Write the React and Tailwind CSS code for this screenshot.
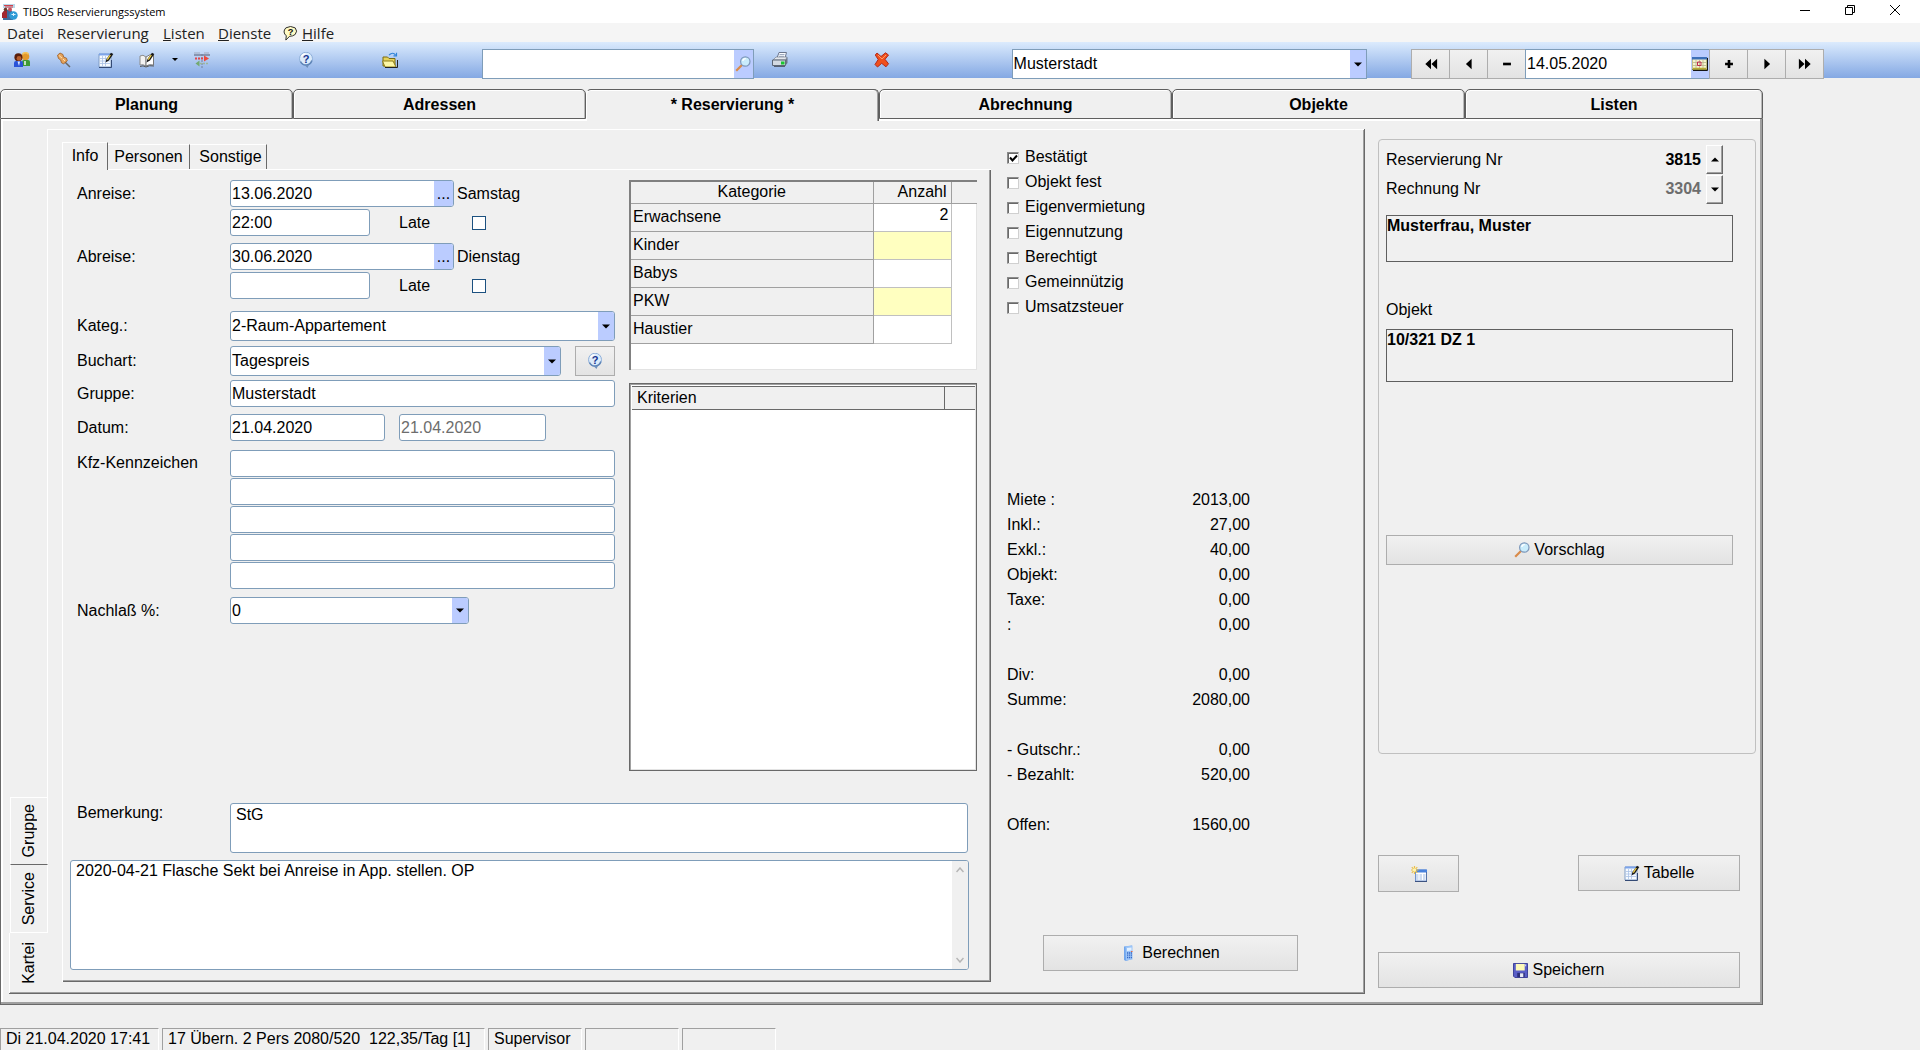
import React from "react";

const FIELD = "h-[27px] rounded-[3px] border border-[#7f9db9] bg-white pl-px text-base text-black outline-none";
const BUTTON = "flex items-center justify-center border border-[#adadad] bg-linear-to-b from-[#f1f1f1] to-[#e3e3e3]";
const BEVEL = "border-r border-b border-[#696969] shadow-[inset_-1px_-1px_0_#a0a0a0]";

function Icon({ children, className = "size-4" }) {
  return (
    <svg viewBox="0 0 16 16" className={`shrink-0 ${className}`} aria-hidden="true">
      {children}
    </svg>
  );
}

const AppIcon = () => (
  <Icon>
    <rect x="1" y="0" width="12" height="4" fill="#b9d9ea" />
    <path d="M2 1.5h9M3 3h8" stroke="#d2414b" />
    <path d="M1 16V8l2-2h6l2 3v7z" fill="#3f6d9c" />
    <path d="M0 14V9l2-2h3v7z" fill="#a3282f" />
    <circle cx="3.5" cy="5.5" r="1.8" fill="#6b3a2a" />
    <circle cx="8" cy="5.5" r="2" fill="#c9505b" />
    <circle cx="11.5" cy="11.5" r="4.2" fill="#2f9bd6" />
    <path d="M11.5 9v3M9.5 10.5h4" stroke="#d9f1ff" />
  </Icon>
);

const PeopleIcon = () => (
  <Icon>
    <circle cx="11.5" cy="4.6" r="3.8" fill="#e39a2e" />
    <path d="M8.5 2.2a3.6 3.6 0 0 1 6 0" stroke="#f3c45f" strokeWidth="1.6" fill="none" />
    <path d="M8 14V10q0-2 2-2h4q2 0 2 2v4z" fill="#3d9a35" />
    <path d="M11 9v4" stroke="#fff" strokeWidth="1.4" />
    <circle cx="4.4" cy="5.2" r="4" fill="#5a1f0c" />
    <circle cx="5" cy="6.4" r="2.4" fill="#b85e2d" />
    <path d="M0 15v-4q0-2 2-2h5q2 0 2 2v4z" fill="#2a53d8" />
    <path d="M3.5 9.5 5 14l1-4.5z" fill="#dfeaff" />
  </Icon>
);

const PinIcon = () => (
  <Icon>
    <path d="m8 9 6 6" stroke="#666" strokeWidth="1.5" />
    <path d="M1.5 3.2 4 1l3 1.5.5 2.5 3 1.2.8 2.6-3.6 3-2.2-1L4.7 8 2.5 6.5z" fill="#e6a45c" stroke="#9a5a20" strokeWidth=".8" />
    <path d="M3 3.5 6 6M7 7l2 2" stroke="#ffe0b0" />
  </Icon>
);

const Pencil = () => (
  <>
    <path d="m7.500 10.500 1-3.500L13 .8 15.300 2 11 8.500z" fill="#181818" />
    <path d="m9.300 7.700 3-4.700" stroke="#f3d34a" strokeWidth="1.3" />
  </>
);

const EditIcon = () => (
  <Icon>
    <path d="M1 2h12v13H1z" fill="#f7fbff" stroke="#7f9cc6" />
    <path d="M1 1.500h12v2H1z" fill="#7da4ea" />
    <path d="M2 6.500h10M2 9h10M2 11.500h10M4.500 4v10M7.500 4v10" stroke="#a9c1e6" strokeWidth=".8" />
    <path d="M1 15.500h12.500V8" stroke="#344a75" fill="none" />
    <Pencil />
  </Icon>
);

const BookIcon = () => (
  <Icon>
    <path d="M1 4q3-2 6 1v9Q4 12 1 13z" fill="#f3f3f3" stroke="#8c8c8c" />
    <path d="M7 5q3-3 7.500-2v10Q10 12 7 14z" fill="#fff" stroke="#777" />
    <path d="M1 14.500q3-1.500 6 .5 3-2 8-1" stroke="#555" fill="none" />
    <Pencil />
  </Icon>
);

const MergeIcon = () => (
  <Icon>
    <path d="M0 3h16" stroke="#75809b" strokeWidth="1.5" />
    <path d="M8 2v14" stroke="#75809b" strokeDasharray="2 1" />
    <path d="M0 1h6M10 1h5" stroke="#a0a9bd" />
    <path d="M1 6.500h9" stroke="#e1474b" strokeWidth="2" strokeDasharray="2 1" />
    <path d="m10 3.500 5 3-5 3z" fill="#ed4a3c" />
    <path d="M6 11.500h8" stroke="#9db69a" strokeWidth="1.5" strokeDasharray="2 1" />
    <path d="m5.500 8.500-4 3 4 3z" fill="#73a970" />
  </Icon>
);

const HelpIcon = () => (
  <Icon>
    <path d="M5 11.500 9.500 16l2-4.500z" fill="#6f8fba" />
    <circle cx="8" cy="6.700" r="6.500" fill="#dcebfa" stroke="#8fb0da" />
    <path d="M2.500 9.500a6 6 0 0 0 11.300-1" stroke="#5f86b8" fill="none" strokeWidth="1.5" />
    <path d="M3.500 4.500a5 5 0 0 1 4-2.700" stroke="#fff" fill="none" strokeWidth="1.5" />
    <text x="8" y="11" textAnchor="middle" fontSize="11" fontWeight="700" fontFamily="Liberation Sans, sans-serif" fill="#16348f">?</text>
  </Icon>
);

const MenuHelpIcon = () => (
  <Icon className="size-[15px]">
    <path d="M3 2q5-3 10 0 3 3.500 0 7-2.500 2-6 2l-4 4 .5-4.500Q-1 6.500 3 2z" fill="#fffbc4" stroke="#222" />
    <text x="8" y="10" textAnchor="middle" fontSize="10" fontWeight="700" fontFamily="Liberation Sans, sans-serif" fill="#111">?</text>
  </Icon>
);

const FolderIcon = () => (
  <Icon>
    <path d="M7 3q4-3.500 6.500 0M14.500.8v3h-3" stroke="#2f83d8" fill="none" strokeWidth="1.2" />
    <path d="M1 14V5h4.500L7 6.500h6V14z" fill="#e6d35a" stroke="#7b6b10" />
    <path d="m3 15-2.500-6H11l3 6z" fill="#fdf7a4" stroke="#8d7d1c" />
    <path d="M15.500 8v7.500H3" stroke="#222" fill="none" />
  </Icon>
);

const SearchIcon = () => (
  <Icon>
    <path d="m1.200 14.800 6-6" stroke="#d98b4a" strokeWidth="2.2" />
    <circle cx="10.300" cy="5.500" r="4.700" fill="#c9ecfb" stroke="#7d97ba" strokeWidth="1.2" />
    <path d="M7.800 5a2.800 2.800 0 0 1 3-2.300" stroke="#fff" fill="none" strokeWidth="1.3" />
  </Icon>
);

const PrinterIcon = () => (
  <Icon>
    <path d="m5 6 2-5.500h7.500L13 6z" fill="#fafcff" stroke="#69758c" />
    <path d="M7.500 2.500h5M7 4.300h5" stroke="#8795b0" strokeWidth=".8" />
    <path d="m1 8 3-3h11l-1.500 3z" fill="#e4e8ee" stroke="#7a8290" strokeWidth=".7" />
    <path d="M.5 8h13v5.500H.5z" fill="#d3d9e1" stroke="#5c6675" />
    <path d="m13.500 8 2-3v6l-2 2.500z" fill="#6c7685" />
    <path d="M9 9.500h3.500v3H9z" fill="#19c82f" />
    <path d="M2 14.500h11" stroke="#555f70" />
  </Icon>
);

const DeleteIcon = () => (
  <Icon>
    <path d="m3 1 4 3.500L11.500.8 14.500 3 11 7.300l3.500 4.500-2.500 3-4.300-3.500L3.500 15 1 12.500l3.200-5L1.300 3z" fill="#f0501c" stroke="#b3291a" />
    <path d="m4 3 4 4 4-4" stroke="#ff9b6a" fill="none" />
  </Icon>
);

const CalendarIcon = () => (
  <Icon>
    <path d="M0 1.500h15v12H0z" fill="#f6f3cf" stroke="#8d8a3c" />
    <path d="M0 1h15v2.500H0z" fill="#3d6fb8" />
    <path d="M1 6.500h13M1 9.500h13M4 4v8M7.500 4v8M11 4v8" stroke="#b9b48a" strokeWidth=".8" />
    <path d="M5.500 6h3.500v3.500H5.500z" fill="none" stroke="#c02850" />
    <path d="M1 12.500h13" stroke="#b7aa35" strokeWidth="1.5" />
    <path d="M1 14.500h14.500V2" stroke="#151515" fill="none" />
  </Icon>
);

const CalculatorIcon = () => (
  <Icon>
    <path d="m3 1.500 8-1V14l-6 2-2-1z" fill="#6fa5ec" />
    <path d="m4.500 1.500 7-1v14l-6.500 1z" fill="#9cc5f8" />
    <path d="m6 3 4.500-.5v3L6 6z" fill="#e3f1ff" />
    <path d="M6 8h5M6 10.200h5M6 12.500h5" stroke="#3668c4" strokeWidth="1.3" strokeDasharray="1.200 .7" />
    <path d="M10 6.500h1.500" stroke="#f06a3c" />
  </Icon>
);

const NewTableIcon = () => (
  <Icon>
    <path d="M4.500 4h11v11h-11z" fill="#fff" stroke="#7094d0" />
    <path d="M4 3.500h12v3H4z" fill="#4a83dd" />
    <path d="M5 9h10M5 11h10M5 13h10" stroke="#9db9e4" strokeDasharray="2.500 1" />
    <path d="M4 15.500h12V6" stroke="#3c5280" fill="none" />
    <path d="M3.500 0v8M0 4h7.500M.8 1.200l5.500 5.600M6.300 1.200.8 6.800" stroke="#ecc04a" strokeWidth="1.2" />
    <circle cx="3.500" cy="4" r="1.700" fill="#fff5b0" />
  </Icon>
);

const SaveIcon = () => (
  <Icon className="size-[15px]">
    <path d="M.5.500h15v15H2L.500 14z" fill="#5a5fc8" stroke="#373b94" />
    <path d="M3 1h9.500v7H3z" fill="#fdf9b8" />
    <path d="M4.500 10.500h8V15h-8z" fill="#2d2f7a" />
    <path d="M7.500 11h3.500v4H7.500z" fill="#e8eaf6" />
    <path d="M13.500 1.500v2" stroke="#dfe2ff" />
  </Icon>
);

function Caret({ up = false }) {
  return (
    <svg viewBox="0 0 8 5" className="h-[5px] w-2" aria-hidden="true">
      <path d={up ? "M0 4.500h8L4 .5z" : "M0 .5h8L4 4.500z"} fill="#000" />
    </svg>
  );
}

function Combo({ label, value, className, square = false }) {
  return (
    <div className={`relative flex border border-[#7f9db9] bg-white ${square ? "" : "overflow-hidden rounded-[3px]"} ${className}`}>
      <select aria-label={label} defaultValue={value} className="w-full appearance-none bg-transparent pl-px text-base text-black outline-none">
        <option>{value}</option>
      </select>
      <span className="pointer-events-none absolute inset-y-0 right-0 flex w-4 items-center justify-center bg-[#bbccff]">
        <Caret />
      </span>
    </div>
  );
}

function Row({ label, htmlFor, className = "", children }) {
  return (
    <div className={`flex items-center ${className}`}>
      <label htmlFor={htmlFor} className="w-[153px] shrink-0">{label}</label>
      {children}
    </div>
  );
}

function DateField({ id, value, day }) {
  return (
    <>
      <div className="flex w-[224px] overflow-hidden rounded-[3px] border border-[#7f9db9] bg-white">
        <input id={id} defaultValue={value} className="h-[25px] min-w-0 flex-1 pl-px outline-none" />
        <button type="button" aria-label={`${day} wählen`} className="w-[19px] bg-[#bbccff]">...</button>
      </div>
      <span className="ml-[3px]">{day}</span>
    </>
  );
}

function TimeRow({ name, value }) {
  return (
    <div className="flex items-center pl-[153px]">
      <input aria-label={`${name} Uhrzeit`} defaultValue={value} className={`${FIELD} w-[140px]`} />
      <label htmlFor={`${name}-late`} className="ml-[29px] w-[73px]">Late</label>
      <input id={`${name}-late`} type="checkbox" className="size-[14px] appearance-none border border-[#1c5180] bg-white checked:bg-[#1c5180]" />
    </div>
  );
}

const NAV_GLYPHS = {
  first: "M8 2v12L1.500 8zM15 2v12L8.500 8z",
  prev: "M11 2v12L4.500 8z",
  minus: "M3.500 6.500h9v3h-9z",
  plus: "M6.500 3.500h3v3h3v3h-3v3h-3v-3h-3v-3h3z",
  next: "M5 2v12l6.500-6z",
  last: "M1 2v12l6.500-6zM8 2v12l6.500-6z",
};

function NavButton({ glyph, label }) {
  return (
    <button type="button" aria-label={label} className={`${BUTTON} -mr-px w-[39px]`}>
      <Icon className="size-[14px]"><path d={NAV_GLYPHS[glyph]} /></Icon>
    </button>
  );
}

function ToolButton({ label, className, children }) {
  return (
    <button type="button" aria-label={label} className={`mb-px shrink-0 ${className}`}>
      {children}
    </button>
  );
}

function Header() {
  return (
    <header>
      <div className="flex h-[23px] items-center bg-white pl-[2px] font-['Open_Sans',sans-serif]">
        <AppIcon />
        <span className="ml-[5px] text-[11px]">TIBOS Reservierungssystem</span>
        <div className="mr-5 mb-[3px] ml-auto flex items-center gap-[35px]">
          <button type="button" aria-label="Minimieren"><svg viewBox="0 0 10 10" className="size-[10px]"><path d="M0 5.500h10" stroke="#000" /></svg></button>
          <button type="button" aria-label="Verkleinern"><svg viewBox="0 0 10 10" className="size-[10px]"><path d="M.5 2.500h7v7h-7zM2.500 2.500v-2h7v7h-2" fill="none" stroke="#000" /></svg></button>
          <button type="button" aria-label="Schließen"><svg viewBox="0 0 10 10" className="size-[10px]"><path d="m0 0 10 10M10 0 0 10" stroke="#000" /></svg></button>
        </div>
      </div>
      <nav className="flex h-[19px] items-center bg-[#f5f5f5] pt-px pl-[7px] font-['Open_Sans',sans-serif] text-[15px] leading-[18px] text-[#222]">
        <button type="button" className="w-[50px] text-left">Datei</button>
        <button type="button" className="w-[106px] text-left">Reservierung</button>
        <button type="button" className="w-[55px] text-left"><u>L</u>isten</button>
        <button type="button" className="w-[65px] text-left"><u>D</u>ienste</button>
        <button type="button" className="flex items-center gap-1"><MenuHelpIcon /><span><u>H</u>ilfe</span></button>
      </nav>
      <div className="flex h-9 items-center bg-linear-to-b from-[#dcebfd] to-[#84a8e3] pr-[97px] pl-[14px]">
        <ToolButton label="Personen" className=""><PeopleIcon /></ToolButton>
        <ToolButton label="Anheften" className="ml-[26px]"><PinIcon /></ToolButton>
        <ToolButton label="Bearbeiten" className="ml-[26px]"><EditIcon /></ToolButton>
        <ToolButton label="Buch" className="ml-[25px]"><BookIcon /></ToolButton>
        <ToolButton label="Mehr" className="ml-[17px] w-2"><svg viewBox="0 0 6 3" className="h-[3px] w-[6px]"><path d="M0 0h6L3 3z" /></svg></ToolButton>
        <ToolButton label="Umbuchen" className="ml-[14px]"><MergeIcon /></ToolButton>
        <ToolButton label="Hilfe" className="ml-[88px]"><HelpIcon /></ToolButton>
        <ToolButton label="Öffnen" className="ml-[68px]"><FolderIcon /></ToolButton>
        <div className="mt-2 ml-[84px] flex h-[30px] min-w-0 flex-[270] border border-[#7f9db9] bg-white">
          <input aria-label="Suche" className="min-w-0 flex-1 pl-px outline-none" />
          <button type="button" aria-label="Suchen" className="flex w-[19px] items-center justify-center bg-[#bbccff]"><SearchIcon /></button>
        </div>
        <ToolButton label="Drucken" className="ml-[18px]"><PrinterIcon /></ToolButton>
        <ToolButton label="Löschen" className="ml-[86px]"><DeleteIcon /></ToolButton>
        <Combo square label="Ort" value="Musterstadt" className="mt-2 ml-[122px] h-[30px] min-w-0 flex-[354]" />
        <div className="mt-2 ml-[44px] flex h-[30px]">
          <NavButton glyph="first" label="Erster" />
          <NavButton glyph="prev" label="Zurück" />
          <NavButton glyph="minus" label="Tag weniger" />
          <div className="-mr-px flex w-[185px] border border-[#7f9db9] bg-white">
            <input aria-label="Datum" defaultValue="14.05.2020" className="min-w-0 flex-1 pl-px outline-none" />
            <button type="button" aria-label="Kalender" className="flex w-[18px] items-center justify-center bg-[#bbccff]"><CalendarIcon /></button>
          </div>
          <NavButton glyph="plus" label="Tag mehr" />
          <NavButton glyph="next" label="Weiter" />
          <NavButton glyph="last" label="Letzter" />
        </div>
      </div>
    </header>
  );
}

const TABS = ["Planung", "Adressen", "* Reservierung *", "Abrechnung", "Objekte", "Listen"];

function MainTabs() {
  return (
    <div role="tablist" className="grid grid-cols-[repeat(5,293fr)_298fr]">
      {TABS.map((tab, i) => (
        <button
          key={tab}
          type="button"
          role="tab"
          aria-selected={i === 2}
          className={`rounded-t-[5px] border border-[#5f5f5f] font-bold ${
            i === 2
              ? "relative -mb-[2px] h-8 border-b-0 border-l-white bg-[#f0f0f0] pb-px shadow-[inset_-1px_0_0_#a0a0a0,inset_0_1px_0_#fff]"
              : "h-[30px] pt-px shadow-[inset_1px_1px_0_#fff,inset_-1px_0_0_#b8b8b8]"
          }`}
        >
          {tab}
        </button>
      ))}
    </div>
  );
}

function InfoForm() {
  return (
    <div className="w-[538px] shrink-0">
      <Row label="Anreise:" htmlFor="anreise"><DateField id="anreise" value="13.06.2020" day="Samstag" /></Row>
      <div className="mt-[2px]"><TimeRow name="anreise" value="22:00" /></div>
      <Row label="Abreise:" htmlFor="abreise" className="mt-[7px]"><DateField id="abreise" value="30.06.2020" day="Dienstag" /></Row>
      <div className="mt-[2px]"><TimeRow name="abreise" value="" /></div>
      <Row label="Kateg.:" className="mt-3"><Combo label="Kategorie" value="2-Raum-Appartement" className="h-[30px] w-[385px]" /></Row>
      <Row label="Buchart:" className="mt-[5px]">
        <Combo label="Buchart" value="Tagespreis" className="h-[30px] w-[331px]" />
        <button type="button" aria-label="Hilfe zur Buchart" className={`${BUTTON} ml-[14px] h-[30px] w-[40px]`}><HelpIcon /></button>
      </Row>
      <Row label="Gruppe:" htmlFor="gruppe" className="mt-1"><input id="gruppe" defaultValue="Musterstadt" className={`${FIELD} w-[385px]`} /></Row>
      <Row label="Datum:" htmlFor="datum" className="mt-[7px]">
        <input id="datum" defaultValue="21.04.2020" className={`${FIELD} w-[155px]`} />
        <input aria-label="Datum geändert" disabled defaultValue="21.04.2020" className="ml-[14px] h-[27px] w-[147px] rounded-[3px] border border-[#7f9db9] bg-white pl-px text-[#6d6d6d]" />
      </Row>
      <div className="mt-[9px] flex">
        <label htmlFor="kfz-1" className="w-[153px] pt-[3px]">Kfz-Kennzeichen</label>
        <div className="flex w-[385px] flex-col gap-px">
          {[1, 2, 3, 4, 5].map((n) => (
            <input key={n} id={`kfz-${n}`} aria-label={`Kfz-Kennzeichen ${n}`} className={FIELD} />
          ))}
        </div>
      </div>
      <Row label="Nachlaß %:" className="mt-2"><Combo label="Nachlaß" value="0" className="h-[27px] w-[239px]" /></Row>
    </div>
  );
}

const CATEGORIES = [["Erwachsene", "2"], ["Kinder", ""], ["Babys", ""], ["PKW", ""], ["Haustier", ""]];

function CategoryTable() {
  return (
    <div className="h-[190px] border-t-2 border-l-2 border-[#808080] bg-white shadow-[inset_-1px_-1px_0_#e3e3e3]">
      <table className="w-full table-fixed border-collapse">
        <thead>
          <tr className="h-[21px] border-b border-[#a0a0a0] bg-[#f0f0f0]">
            <th className="border-r border-[#a0a0a0] font-normal leading-5">Kategorie</th>
            <th className="w-[78px] border-r border-[#a0a0a0] pr-1 text-right font-normal leading-5">Anzahl</th>
            <th className="w-[26px]"></th>
          </tr>
        </thead>
        <tbody>
          {CATEGORIES.map(([name, count], i) => (
            <tr key={name} className="h-7">
              <td className="border-r border-b border-[#a0a0a0] bg-[#f0f0f0] pl-[2px] leading-[26px]">{name}</td>
              <td className={`border-r border-b border-[#c0c0c0] pr-[2px] text-right align-top leading-[22px] ${i % 2 ? "bg-[#ffffc0]" : ""}`}>{count}</td>
              <td></td>
            </tr>
          ))}
        </tbody>
      </table>
    </div>
  );
}

function CriteriaList() {
  return (
    <div className="mt-[13px] flex-1 border border-[#696969] bg-white shadow-[inset_1px_1px_0_#a0a0a0,inset_-1px_-1px_0_#e3e3e3]">
      <table className="mt-[2px] ml-[2px] w-[calc(100%-3px)] border-collapse">
        <thead>
          <tr className="h-[23px] border-t border-b border-[#696969] bg-[#f0f0f0]">
            <th className="border-r border-[#696969] pl-[5px] text-left font-normal leading-[22px]">Kriterien</th>
            <th className="w-[31px]"></th>
          </tr>
        </thead>
      </table>
    </div>
  );
}

function InfoPage() {
  return (
    <section className="mt-3 mb-[11px] ml-[15px] flex min-w-0 flex-1 flex-col">
      <div role="tablist" className="flex h-[27px] items-end">
        <button type="button" role="tab" aria-selected="true" className="relative -mb-px h-[28px] w-[46px] border-t border-r border-l border-t-white border-r-[#696969] border-l-white bg-[#f0f0f0] pb-px">Info</button>
        <button type="button" role="tab" aria-selected="false" className="h-[25px] w-[82px] border-t border-r border-t-white border-r-[#696969]">Personen</button>
        <button type="button" role="tab" aria-selected="false" className="h-[25px] w-[77px] border-t border-r border-t-white border-r-[#696969] pl-[5px]">Sonstige</button>
      </div>
      <div className="flex flex-1 flex-col border-t border-l border-white">
        <div className={`flex flex-1 flex-col pt-[10px] pb-[11px] pl-[7px] ${BEVEL}`}>
          <div className="flex flex-1 pl-[7px]">
            <InfoForm />
            <div className="mr-[13px] ml-[14px] flex min-w-0 flex-1 flex-col">
              <CategoryTable />
              <CriteriaList />
            </div>
          </div>
          <div className="mt-8 mr-[22px] flex pl-[7px]">
            <label htmlFor="bemerkung" className="w-[153px]">Bemerkung:</label>
            <textarea id="bemerkung" defaultValue="StG" className="h-[50px] flex-1 resize-none rounded-[3px] border border-[#7f9db9] bg-white pl-[5px] leading-[22px] outline-none" />
          </div>
          <div className="mt-[7px] mr-[21px] flex h-[110px] overflow-hidden rounded-[3px] border border-[#7f9db9] bg-white">
            <textarea aria-label="Notizen" defaultValue="2020-04-21 Flasche Sekt bei Anreise in App. stellen. OP" className="flex-1 resize-none pl-[5px] leading-5 outline-none" />
            <div className="flex w-4 flex-col items-center justify-between bg-[#f0f0f0] py-[6px]" aria-hidden="true">
              <svg viewBox="0 0 8 6" className="h-[6px] w-2"><path d="m.5 5 3.500-4 3.500 4" fill="none" stroke="#b5b5b5" strokeWidth="1.5" /></svg>
              <svg viewBox="0 0 8 6" className="h-[6px] w-2"><path d="m.5 1 3.500 4 3.500-4" fill="none" stroke="#b5b5b5" strokeWidth="1.5" /></svg>
            </div>
          </div>
        </div>
      </div>
    </section>
  );
}

const FLAGS = ["Bestätigt", "Objekt fest", "Eigenvermietung", "Eigennutzung", "Berechtigt", "Gemeinnützig", "Umsatzsteuer"];

const SUMS = [
  ["Miete :", "2013,00"], ["Inkl.:", "27,00"], ["Exkl.:", "40,00"], ["Objekt:", "0,00"], ["Taxe:", "0,00"], [":", "0,00"],
  ["", ""], ["Div:", "0,00"], ["Summe:", "2080,00"],
  ["", ""], ["- Gutschr.:", "0,00"], ["- Bezahlt:", "520,00"],
  ["", ""], ["Offen:", "1560,00"],
];

function Totals() {
  return (
    <section className="flex w-[373px] shrink-0 flex-col pt-[14px] pb-[22px] pl-4">
      {FLAGS.map((flag, i) => (
        <label key={flag} className="flex h-[25px] items-center">
          <span className="relative mt-[3px] flex">
            <input type="checkbox" defaultChecked={i === 0} className="peer size-3 appearance-none border border-t-[#8a8a8a] border-r-[#d0d0d0] border-b-[#d0d0d0] border-l-[#8a8a8a] bg-white shadow-[inset_1px_1px_0_#696969]" />
            <svg viewBox="0 0 12 12" className="pointer-events-none absolute inset-0 hidden size-3 peer-checked:block"><path d="m3 5.500 2.500 3L10 3.500" fill="none" stroke="#000" strokeWidth="2" /></svg>
          </span>
          <span className="ml-[6px]">{flag}</span>
        </label>
      ))}
      <dl className="mt-[168px] w-[243px]">
        {SUMS.map(([name, amount], i) => (
          <div key={i} className="flex h-[25px] items-center justify-between">
            <dt>{name}</dt>
            <dd>{amount}</dd>
          </div>
        ))}
      </dl>
      <button type="button" className={`${BUTTON} mt-auto ml-[36px] h-9 w-[255px] gap-[5px]`}><CalculatorIcon />Berechnen</button>
    </section>
  );
}

function SideTabs() {
  return (
    <div role="tablist" aria-orientation="vertical" className="flex w-[39px] shrink-0 flex-col">
      <div className="flex-1 border-r border-white" />
      <button type="button" role="tab" aria-selected="false" className="ml-px flex h-[68px] items-center justify-center border border-white border-b-[#696969] pr-px"><span className="rotate-180 [writing-mode:vertical-rl]">Gruppe</span></button>
      <button type="button" role="tab" aria-selected="false" className="ml-px flex h-[68px] items-center justify-center border border-t-0 border-white pr-px"><span className="rotate-180 [writing-mode:vertical-rl]">Service</span></button>
      <button type="button" role="tab" aria-selected="true" className="flex h-[60px] items-center justify-center border-l border-white pr-px"><span className="rotate-180 [writing-mode:vertical-rl]">Kartei</span></button>
    </div>
  );
}

function Spin({ up, label }) {
  return (
    <button type="button" aria-label={label} className="flex h-[29px] w-[17px] items-center justify-center border border-t-white border-r-[#696969] border-b-[#696969] border-l-white shadow-[inset_-1px_-1px_0_#a0a0a0]">
      <Caret up={up} />
    </button>
  );
}

function Sidebar() {
  return (
    <aside className="flex w-[397px] shrink-0 flex-col pt-5 pr-[6px] pb-4 pl-[13px]">
      <div className="flex flex-1 flex-col rounded-[4px] border border-[#c0c0c0] pt-[5px] pr-[22px] pl-[7px]">
        <div className="mr-[10px] flex items-start">
          <div className="flex-1">
            <div className="flex h-[29px] items-center justify-between"><span>Reservierung Nr</span><b>3815</b></div>
            <div className="flex h-[29px] items-center justify-between"><span>Rechnung Nr</span><b className="text-[#6d6d6d]">3304</b></div>
          </div>
          <div className="ml-[5px] flex flex-col gap-px">
            <Spin up label="Nächste Reservierung" />
            <Spin label="Vorherige Reservierung" />
          </div>
        </div>
        <div className="mt-[11px] h-[47px] border border-[#5f5f5f] font-bold leading-5">Musterfrau, Muster</div>
        <div className="mt-[38px]">Objekt</div>
        <div className="mt-[9px] h-[53px] border border-[#5f5f5f] font-bold leading-5">10/321 DZ 1</div>
        <button type="button" className={`${BUTTON} mt-[153px] h-[30px] gap-1`}><SearchIcon />Vorschlag</button>
      </div>
      <div className="mt-[101px] mr-4 flex justify-between">
        <button type="button" aria-label="Neu" className={`${BUTTON} h-[37px] w-[81px]`}><NewTableIcon /></button>
        <button type="button" className={`${BUTTON} h-9 w-[162px] gap-1`}><EditIcon />Tabelle</button>
      </div>
      <button type="button" className={`${BUTTON} mt-[60px] mr-4 h-9 gap-1`}><SaveIcon />Speichern</button>
    </aside>
  );
}

function StatusBar() {
  const cell = "h-[22px] border-t border-l border-t-[#a0a0a0] border-l-[#a0a0a0] border-r border-r-white pl-[5px] whitespace-pre";
  return (
    <footer className="mt-[23px] flex gap-[3px]">
      <div className={`${cell} w-[159px]`}>Di 21.04.2020 17:41</div>
      <div className={`${cell} w-[323px]`}>{"17 Übern. 2 Pers 2080/520  122,35/Tag [1]"}</div>
      <div className={`${cell} w-[94px]`}>Supervisor</div>
      <div className={`${cell} w-[94px]`} />
      <div className={`${cell} w-[94px]`} />
    </footer>
  );
}

export default function App() {
  return (
    <div className="flex min-h-screen flex-col bg-[#f0f0f0] font-['Liberation_Sans',Arial,sans-serif] text-base leading-5 text-black">
      <Header />
      <main className="mt-[11px] mr-[157px] flex flex-1 flex-col">
        <MainTabs />
        <div className="flex flex-1 border-r border-b border-l border-[#696969] shadow-[inset_-2px_-2px_0_#a0a0a0,inset_2px_2px_0_#fff]">
          <div className={`mt-[10px] mb-[10px] ml-2 flex min-w-0 flex-1 ${BEVEL}`}>
            <SideTabs />
            <div className="-ml-px flex min-w-0 flex-1 border-t border-white">
              <InfoPage />
              <Totals />
            </div>
          </div>
          <Sidebar />
        </div>
      </main>
      <StatusBar />
    </div>
  );
}
